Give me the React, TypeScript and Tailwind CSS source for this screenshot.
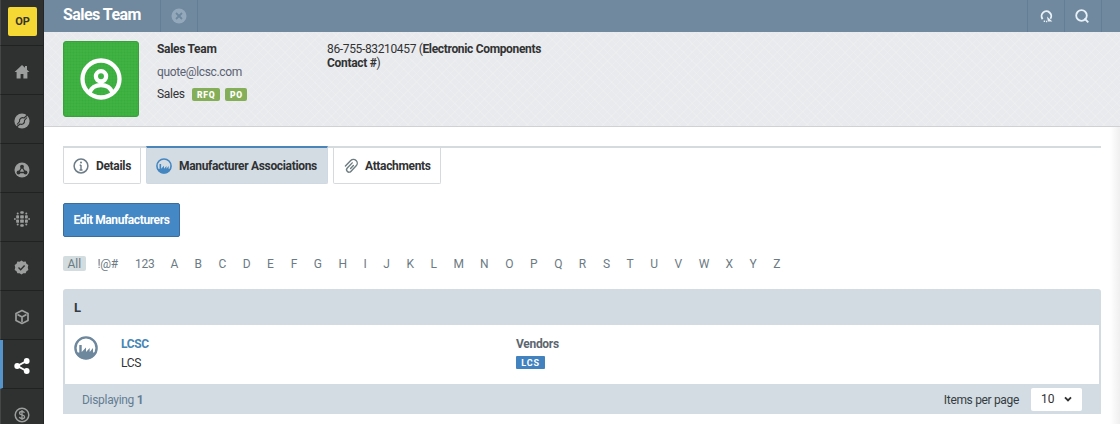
import type { ReactNode } from "react";

const FILTERS: [string, string][] = [
  ["!@#", "w-[37.5px] tracking-[-0.3px]"], ["123", "w-[35.5px] tracking-[-0.2px]"], ["A", "w-[24px]"], ["B", "w-[24px]"], ["C", "w-[24.3px]"],
  ["D", "w-[24.2px]"], ["E", "w-[23.7px]"], ["F", "w-[23.1px]"], ["G", "w-[24.7px]"], ["H", "w-[25px]"],
  ["I", "w-[19.7px]"], ["J", "w-[23.3px]"], ["K", "w-[24px]"], ["L", "w-[23px]"], ["M", "w-[26.5px]"],
  ["N", "w-[25.3px]"], ["O", "w-[24.7px]"], ["P", "w-[24.3px]"], ["Q", "w-[24.5px]"], ["R", "w-[24.2px]"],
  ["S", "w-[23.6px]"], ["T", "w-[23.7px]"], ["U", "w-[24.4px]"], ["V", "w-[24.2px]"], ["W", "w-[26.7px]"],
  ["X", "w-[24px]"], ["Y", "w-[23.7px]"], ["Z", "w-[16px]"],
];

function Factory({ className }: { className: string }) {
  return (
    <svg viewBox="0 0 24 24" className={className} fill="none">
      <circle cx="12" cy="12" r="10.6" stroke="currentColor" strokeWidth="2.4" />
      <path d="M2 16.500h3.300V9h2.400v7l4.300-4.500V16l3.700-4v4l3.300-4v4.500H22A10.800 10.800 0 0 1 2 16.500Z" fill="currentColor" />
    </svg>
  );
}

function NavItem({ children, active = false }: { children: ReactNode; active?: boolean }) {
  return (
    <a
      className={
        active
          ? "flex h-[49px] shrink-0 items-center justify-center border-b border-b-[#202121] border-l-[3px] border-l-[#5593cb] pr-[3px] pt-[3px] text-white"
          : "flex h-[49px] shrink-0 items-center justify-center border-b border-b-[#202121] border-l border-l-[#454646] pr-[1px] pt-[3px] text-[#9c9d9d]"
      }
    >
      {children}
    </a>
  );
}

function Sidebar() {
  return (
    <nav className="flex w-11 shrink-0 flex-col overflow-hidden border-r border-[#242525] bg-[#2f3130]">
      <div className="flex h-[46px] shrink-0 border-b border-b-[#202121] border-l border-l-[#454646] pl-[7px] pt-[7px]">
        <div className="flex h-[29px] w-[29px] items-center justify-center rounded-[2px] bg-[#f5d834] pt-[2px] text-[11px] font-bold text-[#35352f]">OP</div>
      </div>
      <NavItem>
        <svg viewBox="0 0 16 16" className="h-4 w-4" fill="currentColor">
          <path d="M8 1 .6 8h2v6.5h4V10h2.800v4.500h4V8h2L13 5.700V2h-2v1.800Z" />
        </svg>
      </NavItem>
      <NavItem>
        <svg viewBox="0 0 16 16" className="h-4 w-4">
          <circle cx="8" cy="8" r="7.600" fill="currentColor" />
          <path d="M14.500 1 10 5c-2-1-5 .5-4.500 3.500L3 11.500M1.500 15 6 11c2 1 5-.5 4.500-3.500L13 4.500" fill="none" stroke="#2f3130" strokeWidth="1.100" />
        </svg>
      </NavItem>
      <NavItem>
        <svg viewBox="0 0 16 16" className="h-4 w-4">
          <circle cx="8" cy="8" r="7.500" fill="currentColor" />
          <path d="m8 5-3.500 5.500h7L8 5Z" fill="none" stroke="#2f3130" strokeWidth="1.300" />
          <circle cx="8" cy="4.700" r="1.900" fill="#2f3130" />
          <circle cx="4.500" cy="10.500" r="1.900" fill="#2f3130" />
          <circle cx="11.500" cy="10.500" r="1.900" fill="#2f3130" />
        </svg>
      </NavItem>
      <NavItem>
        <svg viewBox="0 0 16 16" className="h-4 w-4" fill="currentColor">
          <rect x="6.200" y="0.200" width="3.600" height="2.600" rx="1" />
          <rect x="6.200" y="13.200" width="3.600" height="2.600" rx="1" />
          <rect x="6.200" y="4.200" width="3.600" height="3.200" rx=".6" />
          <rect x="6.200" y="8.600" width="3.600" height="3.200" rx=".6" />
          <rect x="2.200" y="4.200" width="2.800" height="3.200" rx=".6" />
          <rect x="2.200" y="8.600" width="2.800" height="3.200" rx=".6" />
          <rect x="11" y="4.200" width="2.800" height="3.200" rx=".6" />
          <rect x="11" y="8.600" width="2.800" height="3.200" rx=".6" />
          <circle cx="3.700" cy="2.400" r="1" />
          <circle cx="12.300" cy="2.400" r="1" />
          <circle cx="3.700" cy="13.600" r="1" />
          <circle cx="12.300" cy="13.600" r="1" />
          <circle cx="0.900" cy="8" r=".9" />
          <circle cx="15.100" cy="8" r=".9" />
        </svg>
      </NavItem>
      <NavItem>
        <svg viewBox="0 0 16 16" className="h-[15px] w-[15px]">
          <path d="m8 .5 2 1.300 2.400-.1.9 2.200 2 1.300L14.700 8l.6 2.600-2 1.300-.9 2.300-2.400-.1-2 1.300-2-1.300-2.400.1-.9-2.300-2-1.300L1.300 8 .7 5.200l2-1.300.9-2.200 2.400.1Z" fill="currentColor" />
          <path d="m4.800 8 2.300 2.300 4.200-4.500" fill="none" stroke="#2f3130" strokeWidth="1.500" />
        </svg>
      </NavItem>
      <NavItem>
        <svg viewBox="0 0 16 16" className="h-4 w-4" fill="none" stroke="currentColor" strokeWidth="1.700" strokeLinejoin="round">
          <path d="m8 1.500 6 3v7l-6 3-6-3v-7ZM3.500 5.500 8 8l4.500-2.500M8 8v5" />
        </svg>
      </NavItem>
      <NavItem active>
        <svg viewBox="0 0 16 16" className="h-4 w-4" fill="currentColor">
          <path d="M12.500 3 3.500 8l9 5" fill="none" stroke="currentColor" strokeWidth="2" />
          <circle cx="3.200" cy="8" r="2.900" />
          <circle cx="12.700" cy="3" r="2.900" />
          <circle cx="12.700" cy="13" r="2.900" />
        </svg>
      </NavItem>
      <NavItem>
        <svg viewBox="0 0 16 16" className="h-4 w-4" fill="none" stroke="currentColor">
          <circle cx="8" cy="8" r="6.800" strokeWidth="1.500" />
          <path d="M10.500 5.800C10 4.800 9 4.500 8 4.500c-1.500 0-2.500.7-2.500 1.700C5.500 8.500 10.600 7.400 10.600 9.900c0 1-1.100 1.700-2.600 1.700-1.200 0-2.300-.5-2.700-1.500M8 3v10" strokeWidth="1.300" />
        </svg>
      </NavItem>
    </nav>
  );
}

function TopBar() {
  return (
    <header className="flex h-8 shrink-0 bg-[#70899f]">
      <h1 className="w-[116px] pl-[19px] pt-[5px] text-[16px] font-bold leading-5 tracking-[-0.550px] whitespace-nowrap text-white">Sales Team</h1>
      <div className="flex w-[38px] items-center justify-center border-x border-[#637f98]">
        <svg viewBox="0 0 16 16" className="h-4 w-4">
          <circle cx="8" cy="8" r="7.500" fill="#93a9bb" />
          <path d="m5 5 6 6m0-6-6 6" stroke="#6d879e" strokeWidth="1.800" />
        </svg>
      </div>
      <div className="ml-auto flex text-[#e9f1f8]">
        <div className="flex w-[37px] items-center justify-center border-l border-[#637f98]">
          <svg viewBox="0 0 14 14" className="h-[13px] w-[13px]" fill="none" stroke="currentColor" strokeWidth="2">
            <path d="M2.800 9.800A5.200 5.200 0 1 1 11.200 9.500" />
            <path d="M7.500 7 13.300 12.300H8.500Z" fill="currentColor" stroke="none" />
            <path d="M4 12.200h1.500M6.500 12.500h1.300" strokeWidth="1.600" />
          </svg>
        </div>
        <div className="flex w-[38px] items-center justify-center border-x border-[#637f98] pr-[2px]">
          <svg viewBox="0 0 14 14" className="h-[14px] w-[14px]" fill="none" stroke="currentColor" strokeWidth="1.800">
            <circle cx="6.500" cy="6.500" r="5.300" />
            <path d="m9.500 9.500 3.800 3.800" />
          </svg>
        </div>
        <div className="w-[18px]" />
      </div>
    </header>
  );
}

function Badge({ children }: { children: ReactNode }) {
  return <span className="flex h-[13px] items-center rounded-[2px] bg-[#85ae58] pl-[5px] pr-[4.500px] pt-px text-[8.500px] font-black tracking-[0.800px] text-white">{children}</span>;
}

function Contact() {
  return (
    <section className="flex h-[95px] shrink-0 border-b border-[#cfd1d4] bg-[#e9eaed] bg-[repeating-linear-gradient(45deg,#ffffff20_0_1px,transparent_1px_6px),repeating-linear-gradient(-45deg,#ffffff20_0_1px,transparent_1px_6px)] pl-[19px] pt-[9px] text-[12px] leading-[14px] text-[#323334]">
      <div className="flex h-[76px] w-[76px] shrink-0 items-center justify-center rounded-[3px] border border-[#38a13a] bg-[#3fb243] bg-[repeating-linear-gradient(0deg,#0b850b10_0_1px,transparent_1px_3px),repeating-linear-gradient(90deg,#0b850b10_0_1px,transparent_1px_3px)]">
        <svg viewBox="0 0 42 42" className="h-[42px] w-[42px]" fill="none" stroke="white" strokeWidth="4.300">
          <circle cx="21" cy="21" r="18.500" />
          <circle cx="21" cy="18.300" r="5.100" />
          <path d="M9.500 35c1.500-5 6-8 11.500-8s10 3 11.500 8" />
        </svg>
      </div>
      <div className="w-[170px] shrink-0 pl-[18px] pt-px">
        <div className="font-bold tracking-[-0.300px]">Sales Team</div>
        <div className="mt-[9px] tracking-[-0.350px] text-[#596172]">quote@lcsc.com</div>
        <div className="mt-[8px] flex items-center">
          <span className="w-[35px] tracking-[-0.300px]">Sales</span>
          <div className="flex gap-[5px]"><Badge>RFQ</Badge><Badge>PO</Badge></div>
        </div>
      </div>
      <div className="pl-[18px] pt-px whitespace-nowrap">
        <div><span className="tracking-[-0.350px]">86-755-83210457 (</span><b className="tracking-[-0.330px]">Electronic Components</b></div>
        <div><b className="tracking-[-0.300px]">Contact #</b>)</div>
      </div>
    </section>
  );
}

function Tabs() {
  return (
    <div className="flex h-[38px] items-start gap-[5px] border-t-2 border-[#d5dbdd] text-[12px] font-bold tracking-[-0.330px] whitespace-nowrap text-[#303234]">
      <div className="flex h-9 w-[78px] items-center rounded-b-[2px] border border-t-0 border-[#d5dbdd] pl-[9px]">
        <svg viewBox="0 0 16 16" className="mr-[7px] h-4 w-4 text-[#6c7c87]" fill="none" stroke="currentColor">
          <circle cx="8" cy="8" r="6.900" strokeWidth="1.500" />
          <path d="M8 7v5M6.700 7.300H8M6.500 12h3" strokeWidth="1.400" />
          <circle cx="8" cy="4.500" r="1" fill="currentColor" stroke="none" />
        </svg>
        Details
      </div>
      <div className="-mt-[2px] flex h-[38px] w-[182px] items-center rounded-b-[2px] border border-t-2 border-[#d0d9e1] border-t-[#4b84b8] bg-[#d3dce3] pl-[9px]">
        <Factory className="mr-[7px] h-4 w-4 text-[#4487c0]" />
        Manufacturer Associations
      </div>
      <div className="flex h-9 w-[108px] items-center rounded-b-[2px] border border-t-0 border-[#d5dbdd] pl-[10px]">
        <svg viewBox="0 0 16 16" className="mr-[6px] h-[15px] w-[15px] text-[#6c7c80]" fill="none" stroke="currentColor" strokeWidth="1.500" strokeLinecap="round" strokeLinejoin="round">
          <path d="M1.500 8.500 7.200 2.700a4 4 0 0 1 5.800 5.600l-5.700 6a2.600 2.600 0 0 1-3.800-3.600l5.300-5.500" />
          <path d="m7 11.300 3-3.200" />
        </svg>
        Attachments
      </div>
    </div>
  );
}

function AlphabetFilter() {
  return (
    <div className="mt-[19px] flex h-[15px] items-center text-[12px] leading-[15px] text-[#6c7a83]">
      <span className="mr-[12px] flex h-[15px] w-[22.500px] items-center justify-center rounded-[2px] bg-[#d3dcdf] pt-[2px]">All</span>
      {FILTERS.map(([label, width]) => (
        <span key={label} className={width}><span className="block pt-px">{label}</span></span>
      ))}
    </div>
  );
}

function Results() {
  return (
    <div className="mt-[18px] overflow-hidden rounded-t-[3px] text-[12px]">
      <div className="flex h-[36px] items-center bg-[#d2dbe2] pl-[11px] pt-px text-[13px] font-bold text-[#353b44]">L</div>
      <div className="flex h-[59px] border-x-2 border-[#d2dbe2] pt-[11px] leading-4">
        <Factory className="ml-[9px] h-6 w-6 shrink-0 text-[#6d879d]" />
        <div className="w-[418px] pl-[23px]">
          <div className="font-bold tracking-[-0.400px] text-[#4686b5]">LCSC</div>
          <div className="mt-[3px] tracking-[-0.300px] text-[#303234]">LCS</div>
        </div>
        <div>
          <div className="font-bold tracking-[-0.300px] text-[#5c6670]">Vendors</div>
          <div className="mt-[4px] flex h-[13px] w-[29px] items-center justify-center rounded-[1px] bg-[#4283bf] pt-px text-[9px] font-bold tracking-[0.900px] text-white">LCS</div>
        </div>
      </div>
      <div className="flex h-[30px] items-center bg-[#d3dce3] pl-[19px] text-[#647d92]">
        <span className="pt-[2px] tracking-[-0.300px]">Displaying <b>1</b></span>
        <span className="ml-auto pt-px tracking-[-0.330px] text-[#353c42]">Items per page</span>
        <div className="ml-[12px] mr-[19px] flex h-[23px] w-[51px] items-center rounded-[2px] bg-white pl-[10px] text-[#303234]">
          10
          <svg viewBox="0 0 8 6" className="ml-[9px] h-[6px] w-2" fill="none" stroke="currentColor" strokeWidth="1.900">
            <path d="m1 1.300 3 3 3-3" />
          </svg>
        </div>
      </div>
    </div>
  );
}

export default function App() {
  return (
    <div className="flex h-[424px] w-[1120px] overflow-hidden bg-white font-['Roboto',sans-serif]">
      <Sidebar />
      <div className="flex min-w-0 flex-1 flex-col">
        <TopBar />
        <Contact />
        <main className="flex-1 bg-[linear-gradient(to_right,transparent_calc(100%-10px),#efefef)] pl-[19px] pr-[19px] pt-[19px]">
          <Tabs />
          <button className="mt-[19px] flex h-[34px] w-[117px] items-center justify-center rounded-[2px] border border-[#386d9e] bg-[#4488c5] text-[12px] font-bold tracking-[-0.400px] text-white">Edit Manufacturers</button>
          <AlphabetFilter />
          <Results />
        </main>
      </div>
    </div>
  );
}
